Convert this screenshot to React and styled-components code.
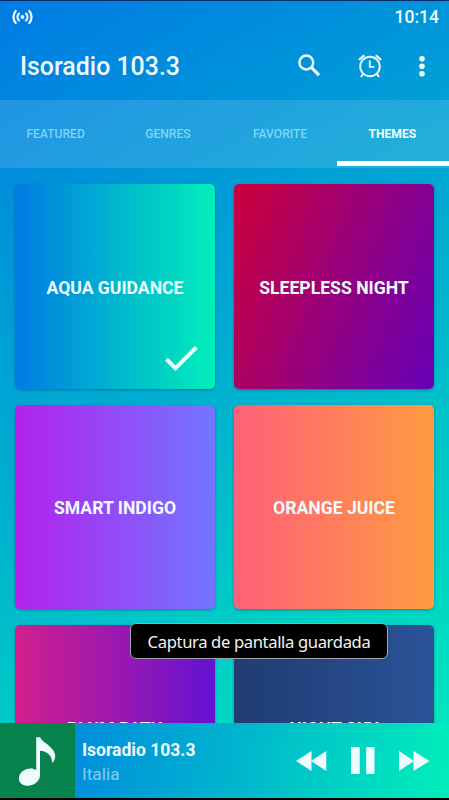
import React from "react";
import styled, { createGlobalStyle } from "styled-components";

const GlobalStyle = createGlobalStyle`
  * { box-sizing: border-box; }
  body { margin: 0; background: #000; }
`;

const Screen = styled.div`
  position: relative;
  display: flex;
  flex-direction: column;
  width: 449px;
  height: 800px;
  overflow: hidden;
  color: #eefbff;
  font-family: Roboto, sans-serif;
  background: linear-gradient(150.7deg, #007be4 0%, #00b2cf 50%, #00efba 100%);
  border-top: 1px solid #052a66;
  border-bottom: 2px solid #000;
`;

const StatusBar = styled.div`
  display: flex;
  flex: none;
  justify-content: space-between;
  align-items: center;
  height: 31px;
  padding: 0 10px 0 12px;
`;

const Clock = styled.span`
  font-size: 17.5px;
  font-weight: 500;
  line-height: 20px;
`;

const AppBar = styled.header`
  display: flex;
  flex: none;
  align-items: center;
  height: 68px;
  padding: 0 23px 0 20px;
`;

const Title = styled.h1`
  flex: 1;
  margin: 0;
  padding-top: 2px;
  font-size: 24.9px;
  font-weight: 500;
  line-height: 30px;
`;

const Actions = styled.div`
  display: flex;
  align-items: center;
`;

const Icon = styled.svg`
  display: block;
  flex: none;
  margin-left: ${(p) => p.$gap || 0}px;
  fill: currentColor;
`;

const Tabs = styled.nav`
  display: grid;
  flex: none;
  grid-template-columns: repeat(4, 1fr);
  height: 68px;
  background: rgba(255, 255, 255, 0.13);
`;

const Tab = styled.div`
  display: flex;
  align-items: center;
  justify-content: center;
  height: 66px;
  padding-top: ${(p) => (p.$active ? 7 : 2)}px;
  padding-right: 1px;
  border-bottom: ${(p) => (p.$active ? "5px solid #fff" : "0")};
  color: ${(p) => (p.$active ? "#f4fdff" : "rgba(150, 224, 255, 0.82)")};
  font-size: 12.1px;
  font-weight: ${(p) => (p.$active ? 700 : 500)};
`;

const ThemeGrid = styled.main`
  display: grid;
  flex: 1;
  min-height: 0;
  overflow: hidden;
  grid-template-columns: 200px 200px;
  grid-auto-rows: 204.5px;
  gap: 16px 19px;
  padding: 16px 15px 0;
`;

const ThemeCard = styled.section`
  position: relative;
  display: flex;
  align-items: center;
  justify-content: center;
  padding-top: 3px;
  border-radius: 5px;
  background: ${(p) => p.$paint};
  box-shadow: 0 1px 3px rgba(0, 40, 80, 0.4);
  font-size: 17.6px;
  font-weight: 700;
`;

const Check = styled.svg`
  position: absolute;
  right: 12.5px;
  bottom: 8.5px;
  width: 44px;
  height: 44px;
  fill: currentColor;
  stroke: currentColor;
  stroke-width: 0.3;
`;

const Player = styled.footer`
  display: flex;
  flex: none;
  align-items: center;
  height: 75px;
  padding-right: 19px;
  background: linear-gradient(99.5deg, #007be4 0%, #00b2cf 50%, #00efba 100%);
`;

const Cover = styled.div`
  width: 75px;
  height: 75px;
  background: #07824d;
`;

const TrackInfo = styled.div`
  flex: 1;
  padding: 3px 0 0 7px;
`;

const Station = styled.div`
  font-size: 17.5px;
  font-weight: 700;
  line-height: 24px;
`;

const Country = styled.div`
  color: rgba(170, 228, 250, 0.75);
  font-size: 17.3px;
  line-height: 24px;
`;

const Toast = styled.div`
  position: absolute;
  top: 622px;
  left: 130px;
  display: flex;
  align-items: center;
  justify-content: center;
  width: 258px;
  height: 36px;
  border: 1px solid #a5a5a5;
  border-radius: 6px;
  background: #000;
  color: #f3f3f3;
  font-family: "Noto Sans", sans-serif;
  font-size: 16.6px;
  letter-spacing: -0.36px;
  white-space: nowrap;
`;

const tabs = ["FEATURED", "GENRES", "FAVORITE", "THEMES"];

const themes = [
  { name: "AQUA GUIDANCE", paint: "linear-gradient(90deg, #007be4, #00b5ce 50%, #00efba)", selected: true },
  { name: "SLEEPLESS NIGHT", paint: "linear-gradient(112deg, #cd003a, #930081 55%, #6600b8)" },
  { name: "SMART INDIGO", paint: "linear-gradient(90deg, #b321ed, #7376ff)" },
  { name: "ORANGE JUICE", paint: "linear-gradient(90deg, #ff6179, #ff9b42)" },
  { name: "PLUM PATH", paint: "linear-gradient(90deg, #d31f8b, #6412d3)" },
  { name: "NIGHT SKY", paint: "linear-gradient(90deg, #203c72, #2b5298)" },
];

export default function App() {
  return (
    <>
      <GlobalStyle />
      <Screen>
        <StatusBar>
          <Icon width="22" height="18" viewBox="0 0 22 18">
            <circle cx="10.5" cy="9" r="1.9" />
            <g fill="none" stroke="currentColor" strokeWidth="2.3" strokeLinecap="round">
              <path d="M6.9 5.6a5 5 0 0 0 0 6.8M14.1 5.6a5 5 0 0 1 0 6.8" />
              <path d="M3.7 3a9.2 9.2 0 0 0 0 12M17.3 3a9.2 9.2 0 0 1 0 12" />
            </g>
          </Icon>
          <Clock>10:14</Clock>
        </StatusBar>
        <AppBar>
          <Title>Isoradio 103.3</Title>
          <Actions>
            <Icon width="24" height="24" viewBox="0 0 24 24">
              <g fill="none" stroke="currentColor">
                <circle cx="9.3" cy="8.5" r="6.9" strokeWidth="2.5" />
                <path d="M14 13.2l8 8" strokeWidth="3.2" />
              </g>
            </Icon>
            <Icon $gap={36} width="26" height="26" viewBox="0 0 26 26">
              <g fill="none" stroke="currentColor" strokeWidth="1.9">
                <circle cx="13" cy="13.5" r="9.8" />
                <path d="M12.8 7.5v6.4h4.5" />
                <path d="M2 6.9L7.2 2.2M24 6.9l-5.2-4.7" strokeWidth="2.2" />
                <path d="M6.3 20.8l-2.4 3M19.7 20.8l2.4 3" />
              </g>
            </Icon>
            <Icon $gap={35} width="8" height="24" viewBox="0 0 8 24">
              <circle cx="4" cy="4.8" r="2.8" />
              <circle cx="4" cy="12.3" r="2.8" />
              <circle cx="4" cy="19.8" r="2.8" />
            </Icon>
          </Actions>
        </AppBar>
        <Tabs>
          {tabs.map((tab) => (
            <Tab key={tab} $active={tab === "THEMES"}>{tab}</Tab>
          ))}
        </Tabs>
        <ThemeGrid>
          {themes.map((theme) => (
            <ThemeCard key={theme.name} $paint={theme.paint}>
              {theme.name}
              {theme.selected && (
                <Check viewBox="0 0 24 24">
                  <path d="M9 16.17L4.83 12l-1.42 1.41L9 19 21 7l-1.41-1.41z" />
                </Check>
              )}
            </ThemeCard>
          ))}
        </ThemeGrid>
        <Player>
          <Cover>
            <Icon width="75" height="75" viewBox="0 0 75 75">
              <path d="M36.2 14.2h4c1.8 5.4 14.8 9.3 15 19 .1 3.1-1.4 5.2-3.3 6.8 .7-7.4-4.8-11.6-11.9-12.2V52c0 6-5.6 10.7-12.2 10.7-5.2 0-8.9-2.9-8.9-7.3 0-5.6 5.6-9.9 11.5-9.9 2.3 0 4.4.6 5.8 1.7z" />
            </Icon>
          </Cover>
          <TrackInfo>
            <Station>Isoradio 103.3</Station>
            <Country>Italia</Country>
          </TrackInfo>
          <Icon width="31" height="20" viewBox="0 0 31 20">
            <path d="M0 10L15.5 0v20zM15 10L30.3 0v20z" />
          </Icon>
          <Icon $gap={24} width="24" height="27" viewBox="0 0 24 27">
            <path d="M0 0h8.7v27H0zM15.2 0h8.3v27h-8.3z" />
          </Icon>
          <Icon $gap={24} width="31" height="20" viewBox="0 0 31 20">
            <path d="M0 0l15 10L0 20zM14.5 0L30.5 10l-16 10z" />
          </Icon>
        </Player>
        <Toast>Captura de pantalla guardada</Toast>
      </Screen>
    </>
  );
}
